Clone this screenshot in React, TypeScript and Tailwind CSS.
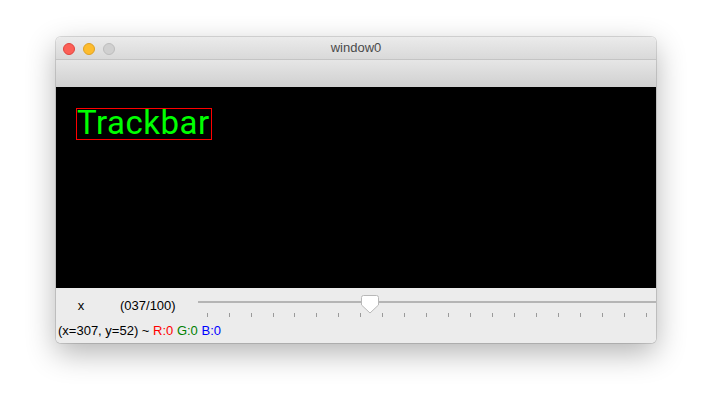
const TICKS = Array.from({ length: 21 }, (_, i) => i);

function TrafficLights() {
  return (
    <div className="absolute left-[7px] top-[6px] flex gap-[8px]">
      <span className="w-[12px] h-[12px] rounded-full bg-[#fc5f57] border border-[#e0443e]" />
      <span className="w-[12px] h-[12px] rounded-full bg-[#fdbc2e] border border-[#dea123]" />
      <span className="w-[12px] h-[12px] rounded-full bg-[#d0d0d0] border border-[#bdbdbd]" />
    </div>
  );
}

function Thumb() {
  return (
    <svg width="18" height="19" viewBox="0 0 18 19" className="absolute left-[163px] top-[7px]">
      <path
        d="M2.5 0.5 H15.5 a2 2 0 0 1 2 2 V10 L9 18 L0.5 10 V2.5 a2 2 0 0 1 2 -2 Z"
        fill="#ffffff"
        stroke="#b8b8b8"
        strokeWidth="1"
      />
    </svg>
  );
}

function Slider() {
  return (
    <div className="relative flex-1 h-full px-[9px]">
      <div className="absolute left-0 right-0 top-[13px] h-[2px] bg-[#b5b5b5]" />
      <div className="flex justify-between pt-[25px]">
        {TICKS.map((t) => (
          <span key={t} className="w-px h-[4px] bg-[#9a9a9a]" />
        ))}
      </div>
      <Thumb />
    </div>
  );
}

export default function App() {
  return (
    <div
      className="w-[712px] h-[417px] bg-white pl-[56px] pt-[37px]"
      style={{ fontFamily: '"Liberation Sans", Arial, sans-serif' }}
    >
      <div className="w-[600px] h-[306px] rounded-[5px] overflow-hidden flex flex-col shadow-[0_10px_30px_rgba(0,0,0,0.3),0_0_0_1px_rgba(0,0,0,0.13)]">
        {/* title bar */}
        <div className="relative h-[22px] bg-gradient-to-b from-[#ebebeb] to-[#d9d9d9] flex items-center justify-center">
          <TrafficLights />
          <span className="text-[13px] text-[#4b4b4b]">window0</span>
        </div>
        {/* toolbar */}
        <div className="h-[28px] border-t border-[#c4c4c4] bg-gradient-to-b from-[#e6e6e6] to-[#d0d0d0]" />
        {/* image */}
        <div className="h-[201px] bg-black pl-[20px] pt-[21px]">
          <div className="relative w-[136px] h-[32px] border border-[#ff0000]">
            <span
              className="absolute left-[0px] top-[-8px] text-[33px] leading-[44px] text-[#00ff00] font-normal tracking-[0.5px]"
              style={{ fontFamily: "Roboto, sans-serif" }}
            >
              Trackbar
            </span>
          </div>
        </div>
        {/* controls */}
        <div className="flex-1 bg-[#ececec] flex flex-col text-[13px] text-black">
          <div className="h-[32px] flex items-start">
            <span className="w-[24px] ml-[13px] mt-[10px] text-center leading-[16px]">x</span>
            <span className="ml-[27px] mt-[10px] leading-[16px]">(037/100)</span>
            <div className="ml-[22px] flex-1 h-full">
              <Slider />
            </div>
          </div>
          <div className="pl-[2px] leading-[16px] pt-[3px]">
            (x=307, y=52) ~ <span className="text-[#ff0000]">R:0</span>{" "}
            <span className="text-[#008000]">G:0</span>{" "}
            <span className="text-[#0000ff]">B:0</span>
          </div>
        </div>
      </div>
    </div>
  );
}
